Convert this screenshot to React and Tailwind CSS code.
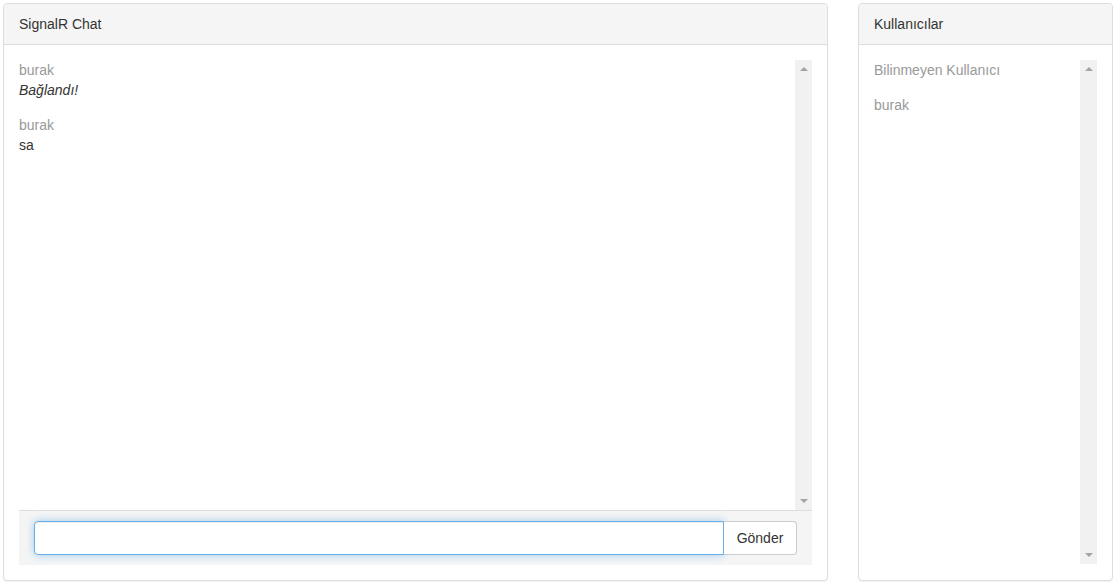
import React, { useState } from 'react';

const messages = [
  { id: 1, user: 'burak', text: 'Bağlandı!', system: true },
  { id: 2, user: 'burak', text: 'sa' },
];

const users = ['Bilinmeyen Kullanıcı', 'burak'];

// old-style chrome scrollbar track, drawn rather than relying on the browser
const FakeScrollbar = () => (
  <div className="flex w-[17px] shrink-0 flex-col justify-between bg-[#f1f1f1] py-[7px]">
    <div className="mx-auto h-0 w-0 border-x-[4px] border-b-[4px] border-x-transparent border-b-[#a3a3a3]" />
    <div className="mx-auto h-0 w-0 border-x-[4px] border-t-[4px] border-x-transparent border-t-[#a3a3a3]" />
  </div>
);

const Panel = ({ title, className, children }) => (
  <div className={`flex flex-col rounded-[4px] border border-[#ddd] bg-white shadow-[0_1px_1px_rgba(0,0,0,0.05)] ${className}`}>
    <div className="rounded-t-[3px] border-b border-[#ddd] bg-[#f5f5f5] px-[15px] py-[10px] text-[14px] leading-[20px] text-[#333]">
      {title}
    </div>
    <div className="flex flex-1 flex-col p-[15px]">{children}</div>
  </div>
);

export default function App() {
  const [draft, setDraft] = useState('');

  return (
    <div className="flex h-[586px] gap-[30px] bg-white px-[3px] pt-[3px] font-['Liberation_Sans',Arial,sans-serif] text-[14px] leading-[20px] text-[#333]">
      <Panel title="SignalR Chat" className="h-[578px] w-[825px]">
        <div className="flex h-[450px]">
          <div className="flex-1">
            {messages.map((m) => (
              <div key={m.id} className="mb-[15px]">
                <div className="text-[#999]">{m.user}</div>
                <div className={m.system ? 'italic' : ''}>{m.text}</div>
              </div>
            ))}
          </div>
          <FakeScrollbar />
        </div>
        <div className="flex border-t border-[#ddd] bg-[#f5f5f5] px-[15px] py-[10px]">
          <input
            value={draft}
            onChange={(e) => setDraft(e.target.value)}
            className="h-[34px] flex-1 rounded-l-[4px] border border-[#66afe9] bg-white px-3 text-[14px] outline-none shadow-[inset_0_1px_1px_rgba(0,0,0,0.075),0_0_8px_rgba(102,175,233,0.6)]"
          />
          <button className="h-[34px] w-[73px] rounded-r-[4px] border border-l-0 border-[#ccc] bg-white text-[14px] text-[#333]">
            Gönder
          </button>
        </div>
      </Panel>

      <Panel title="Kullanıcılar" className="h-[578px] w-[255px]">
        <div className="flex h-[504px]">
          <div className="flex-1">
            {users.map((u) => (
              <div key={u} className="mb-[15px] text-[#999]">
                {u}
              </div>
            ))}
          </div>
          <FakeScrollbar />
        </div>
      </Panel>
    </div>
  );
}
